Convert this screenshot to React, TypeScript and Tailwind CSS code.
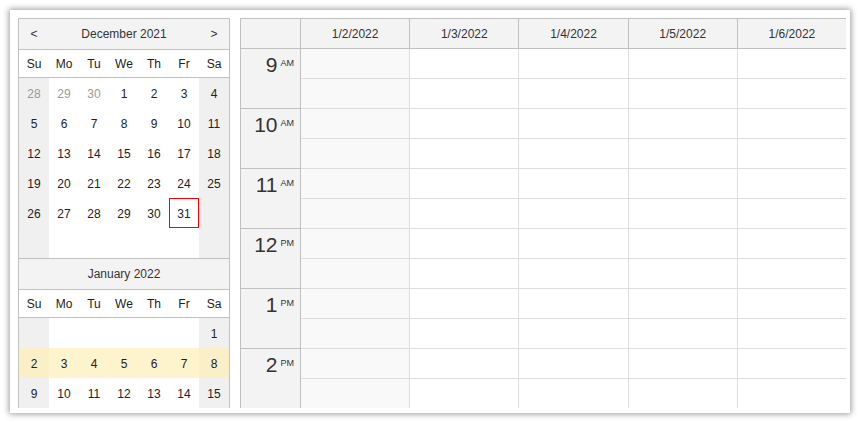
import React from "react";

type Cell = { day?: number; other?: boolean; today?: boolean };

const dayNames = ["Su", "Mo", "Tu", "We", "Th", "Fr", "Sa"];

const december: Cell[][] = [
  [{ day: 28, other: true }, { day: 29, other: true }, { day: 30, other: true }, { day: 1 }, { day: 2 }, { day: 3 }, { day: 4 }],
  [5, 6, 7, 8, 9, 10, 11].map((d) => ({ day: d })),
  [12, 13, 14, 15, 16, 17, 18].map((d) => ({ day: d })),
  [19, 20, 21, 22, 23, 24, 25].map((d) => ({ day: d })),
  [{ day: 26 }, { day: 27 }, { day: 28 }, { day: 29 }, { day: 30 }, { day: 31, today: true }, {}],
  [{}, {}, {}, {}, {}, {}, {}],
];

// only the rows that fit in the visible area
const january: Cell[][] = [
  [{}, {}, {}, {}, {}, {}, { day: 1 }],
  [2, 3, 4, 5, 6, 7, 8].map((d) => ({ day: d })),
  [9, 10, 11, 12, 13, 14, 15].map((d) => ({ day: d })),
];

function Month(props: { title: string; rows: Cell[][]; selectedRow?: number; nav?: boolean }) {
  const { title, rows, selectedRow, nav } = props;
  return (
    <div className="border-t border-[#c0c0c0]">
      <div className="grid grid-cols-7 h-[31px] bg-[#f3f3f3] border-b border-[#c0c0c0] items-center text-[12px] text-[#333]">
        <div className="text-center">{nav ? "<" : ""}</div>
        <div className="col-span-5 text-center">{title}</div>
        <div className="text-center">{nav ? ">" : ""}</div>
      </div>
      <div className="grid grid-cols-7 h-[28px] bg-white border-b border-[#c0c0c0] items-center text-[12px] text-[#222]">
        {dayNames.map((n) => (
          <div key={n} className="text-center">
            {n}
          </div>
        ))}
      </div>
      {rows.map((row, ri) => (
        <div key={ri} className="grid grid-cols-7 h-[30px] text-[12px]">
          {row.map((c, ci) => {
            const weekend = ci === 0 || ci === 6;
            let bg = weekend ? "bg-[#f0f0f0]" : "bg-white";
            if (ri === selectedRow) bg = weekend ? "bg-[#faefc6]" : "bg-[#fdf3cc]";
            return (
              <div
                key={ci}
                className={`flex items-center justify-center pt-px ${bg} ${c.other ? "text-[#999]" : "text-[#222]"} ${
                  c.today ? "border border-[#ff0000]" : ""
                }`}
              >
                {c.day ?? ""}
              </div>
            );
          })}
        </div>
      ))}
    </div>
  );
}

function Navigator() {
  return (
    <div className="w-[212px] shrink-0 border-x border-[#c0c0c0] bg-white">
      <Month title="December 2021" rows={december} nav />
      <Month title="January 2022" rows={january} selectedRow={1} />
    </div>
  );
}

const columns = ["1/2/2022", "1/3/2022", "1/4/2022", "1/5/2022", "1/6/2022"];
const hours = [
  { h: "9", m: "AM" },
  { h: "10", m: "AM" },
  { h: "11", m: "AM" },
  { h: "12", m: "PM" },
  { h: "1", m: "PM" },
  { h: "2", m: "PM" },
];

function Calendar() {
  return (
    <div className="w-[606px] shrink-0 border-l border-t border-[#c0c0c0]">
      <div className="flex h-[30px] bg-[#f3f3f3] border-b border-[#c0c0c0] text-[12px] text-[#333]">
        <div className="w-[60px] shrink-0 border-r border-[#c0c0c0]" />
        {columns.map((c, i) => (
          <div
            key={c}
            className={`flex-1 flex items-center justify-center pt-px ${i < columns.length - 1 ? "border-r border-[#c0c0c0]" : ""}`}
          >
            {c}
          </div>
        ))}
      </div>
      <div className="flex">
        <div className="w-[60px] shrink-0 bg-[#f3f3f3] border-r border-[#c0c0c0]">
          {hours.map((h) => (
            <div key={h.h} className="h-[60px] border-b border-[#c0c0c0] text-right pr-[6px] pt-[4px] text-[#333]">
              <span className="text-[21px] leading-[24px]">{h.h}</span>
              <span className="inline-block align-top pt-[6px] pl-[3px] text-[9px] leading-none">{h.m}</span>
            </div>
          ))}
        </div>
        {columns.map((c, i) => (
          <div
            key={c}
            className={`flex-1 ${i === 0 ? "bg-[#f9f9f9]" : "bg-white"} ${
              i < columns.length - 1 ? "border-r border-[#dddddd]" : ""
            }`}
          >
            {hours.map((h) => (
              <React.Fragment key={h.h}>
                <div className="h-[30px] border-b border-[#dddddd]" />
                <div className="h-[30px] border-b border-[#dddddd]" />
              </React.Fragment>
            ))}
          </div>
        ))}
      </div>
    </div>
  );
}

export default function App() {
  return (
    <div className="w-[860px] h-[423px] bg-white p-[10px]" style={{ fontFamily: '"Liberation Sans", Arial, sans-serif' }}>
      <div className="w-[840px] h-[403px] bg-white shadow-[0_0_6px_1px_rgba(0,0,0,0.4)] pl-2 pt-2">
        <div className="flex gap-[10px] h-[390px] overflow-hidden">
          <Navigator />
          <Calendar />
        </div>
      </div>
    </div>
  );
}
